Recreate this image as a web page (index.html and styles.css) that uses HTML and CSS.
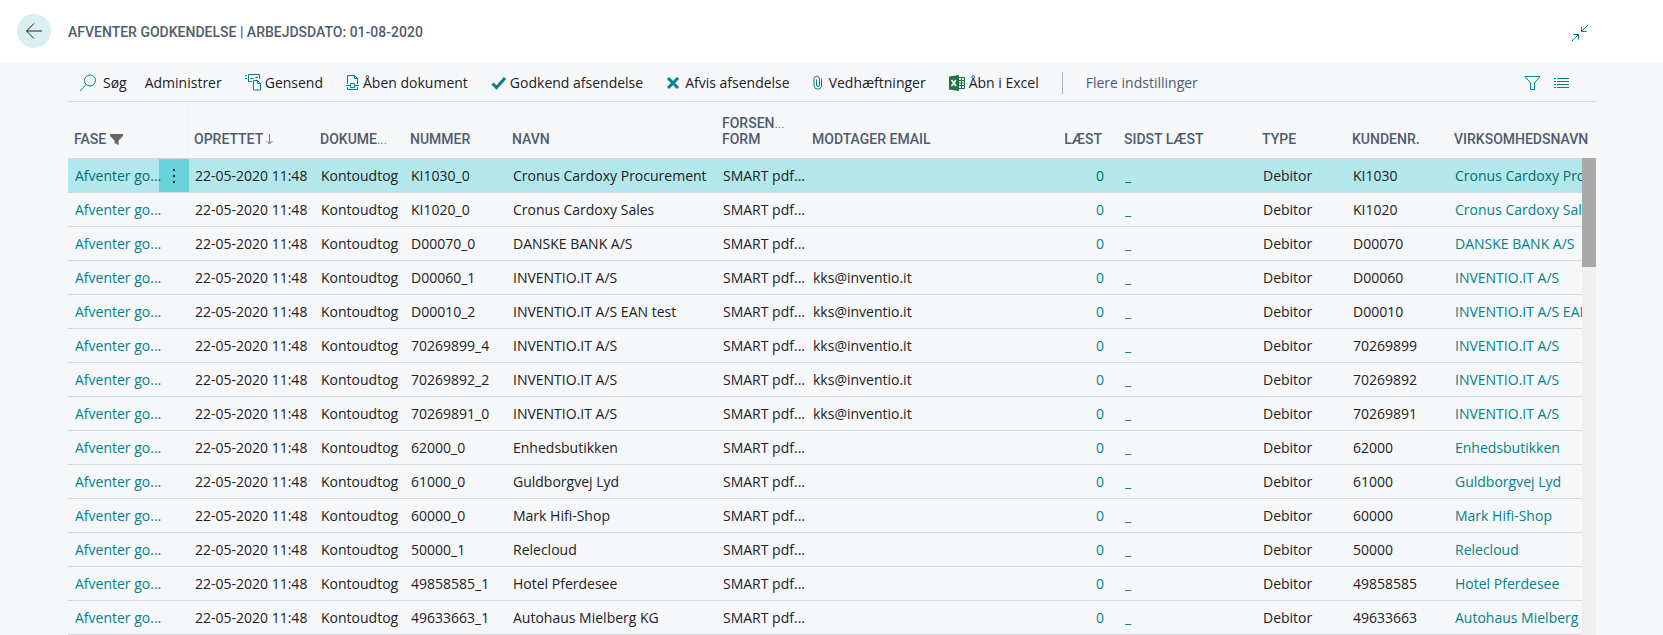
FILE: index.html
```html
<!DOCTYPE html>
<html lang="da">
<head>
<meta charset="utf-8">
<meta name="viewport" content="width=device-width, initial-scale=1">
<title>Afventer godkendelse</title>
<link rel="stylesheet" href="styles.css">
</head>
<body>
<header class="page-header">
    <button type="button" class="back" aria-label="Tilbage">
        <svg width="18" height="18" viewBox="0 0 18 18"><path d="M17 9H1.500M9 1.500L1.500 9L9 16.500"/></svg>
    </button>
    <h1 class="title">AFVENTER GODKENDELSE | ARBEJDSDATO: 01-08-2020</h1>
    <button type="button" class="collapse" aria-label="Skjul">
        <svg class="line" width="18" height="18" viewBox="0 0 18 18"><path d="M17 1L10.500 7.500M10.500 2.500V7.500H15.500M1 17L7.500 10.500M2.500 10.500H7.500V15.500"/></svg>
    </button>
</header>

<main class="content">
    <nav class="toolbar">
        <button type="button" class="action search">
            <svg class="line" width="18" height="18" viewBox="0 0 18 18"><circle cx="11" cy="6.500" r="5.500"/><path d="M7 10.500L1 17"/></svg>
            Søg
        </button>
        <button type="button" class="action">Administrer</button>
        <button type="button" class="action">
            <svg class="line" width="17" height="17" viewBox="0 0 17 17"><path d="M0 1.500H2M0 4.500H2M3.500 7.500V.500H14.500V5M3 7.500H7M5.500 4.500H8.500M11 2.500V4.500M11 3.500H13"/><path d="M8.500 6.500H12.500L15.500 9.500V16H8.500zM12.500 6.500V9.500H15.500"/></svg>
            Gensend
        </button>
        <button type="button" class="action">
            <svg class="line" width="14" height="16" viewBox="0 0 14 16"><path d="M1.500 9V.500H8.500L11.500 3.500V9M8.500 .500V3.500H11.500M0 10.500H4M9 10.500H13M1.500 12V14.500H11.500V12"/><path d="M4.500 8.500H8.500V12.500H4.500z"/></svg>
            Åben dokument
        </button>
        <button type="button" class="action">
            <svg class="bold" width="16" height="14" viewBox="0 0 16 14"><path d="M1.500 7.500L5.500 11.500L14 2"/></svg>
            Godkend afsendelse
        </button>
        <button type="button" class="action wide">
            <svg class="bold" width="14" height="14" viewBox="0 0 14 14"><path d="M2 2L12 12M12 2L2 12"/></svg>
            Afvis afsendelse
        </button>
        <button type="button" class="action clip">
            <svg class="line" width="10" height="16" viewBox="0 0 10 16"><path d="M3.500 4.500V10A1.300 1.300 0 0 0 6.500 10V3.500A2.800 2.800 0 0 0 1 3.500V11A3.800 3.800 0 0 0 8.500 11V3.500"/></svg>
            Vedhæftninger
        </button>
        <button type="button" class="action">
            <svg width="17" height="16" viewBox="0 0 17 16"><path fill="#217346" d="M0 1.500L10 0V16L0 14.500z"/><path fill="none" stroke="#217346" d="M10 2.500H15.500V13.500H10M10 5.500H15M10 8H15M10 10.500H15M12.500 2.500V13.500"/><path stroke="#fff" stroke-width="1.500" d="M2.500 5L7 11M7 5L2.500 11"/></svg>
            Åbn i Excel
        </button>
        <span class="divider"></span>
        <button type="button" class="action more">Flere indstillinger</button>
        <span class="spacer"></span>
        <button type="button" class="tool" aria-label="Filter">
            <svg class="line" width="17" height="16" viewBox="0 0 17 16"><path d="M1 1.500H16L10.500 8V14.500H6.500V8z"/></svg>
        </button>
        <button type="button" class="tool" aria-label="Liste">
            <svg class="line" width="16" height="12" viewBox="0 0 16 12"><path d="M0 1.500H2M3 1.500H15M0 4.500H2M3 4.500H15M0 7.500H2M3 7.500H15M0 10.500H2M3 10.500H15"/></svg>
        </button>
    </nav>

    <div class="list">
        <table class="grid">
            <colgroup>
                <col class="c-fase"><col class="c-menu"><col class="c-date"><col class="c-small"><col class="c-number"><col class="c-name"><col class="c-small"><col><col class="c-read"><col class="c-last"><col class="c-small"><col class="c-number"><col class="c-company">
            </colgroup>
            <thead>
                <tr>
                    <th colspan="2">FASE <svg width="13" height="11" viewBox="0 0 13 11"><path fill="#666" d="M0 0H13V2L8.500 6.500V11L4.500 9V6.500L0 2z"/></svg></th>
                    <th>OPRETTET <svg width="7" height="11" viewBox="0 0 7 11"><path fill="none" stroke="#777" d="M3.500 0V10M.5 7L3.500 10L6.500 7"/></svg></th>
                    <th>DOKUME<span class="dots">...</span></th>
                    <th>NUMMER</th>
                    <th>NAVN</th>
                    <th>FORSEN<span class="dots">...</span><br>FORM</th>
                    <th>MODTAGER EMAIL</th>
                    <th class="right">LÆST</th>
                    <th>SIDST LÆST</th>
                    <th>TYPE</th>
                    <th>KUNDENR.</th>
                    <th>VIRKSOMHEDSNAVN</th>
                </tr>
            </thead>
            <tbody id="rows"></tbody>
        </table>
        <div class="scrollbar"><div class="thumb"></div></div>
    </div>
</main>
<script src="script.js"></script>
</body>
</html>
```
FILE: styles.css
```css
* {
    box-sizing: border-box;
}
body {
    margin: 0;
    background: #f6f7f9;
    color: #212121;
    font: 14px/20px "Open Sans", "Noto Sans", sans-serif;
}
button {
    padding: 0;
    border: 0;
    background: none;
    color: inherit;
    font: inherit;
    cursor: pointer;
}
svg {
    flex: none;
}
.line {
    fill: none;
    stroke: #00838a;
}
.bold {
    fill: none;
    stroke: #00838a;
    stroke-width: 3;
}

/* header */
.page-header {
    display: flex;
    align-items: center;
    height: 62px;
    padding: 0 74px 0 17px;
    background: #fff;
}
.back {
    display: flex;
    align-items: center;
    justify-content: center;
    width: 34px;
    height: 34px;
    margin-right: 17px;
    border-radius: 50%;
    background: #d9f0f0;
}
.back svg {
    fill: none;
    stroke: #222;
}
.title {
    margin: 0;
    padding-top: 2px;
    color: #505c6d;
    font: 500 14px/20px Roboto, sans-serif;
}
.collapse {
    display: flex;
    margin-left: auto;
    padding-top: 4px;
}

/* toolbar */
.content {
    padding: 0 67px 0 68px;
}
.toolbar {
    display: flex;
    align-items: center;
    gap: 23px;
    height: 40px;
    padding: 2px 26px 0 11px;
    border-bottom: 1px solid #d5d8dc;
    white-space: nowrap;
}
.action {
    display: flex;
    align-items: center;
    gap: 3px;
}
.search {
    gap: 6px;
    margin-right: -5px;
}
.wide {
    gap: 5px;
}
.clip {
    gap: 6px;
}
.more {
    color: #505c6d;
}
.divider {
    width: 1px;
    height: 22px;
    background: #a9b0bc;
}
.spacer {
    flex: 1;
}
.tool {
    display: flex;
}
.tool + .tool {
    margin-left: -10px;
}

/* list */
.list {
    display: flex;
}
.grid {
    flex: 1;
    width: 0;
    table-layout: fixed;
    border-spacing: 0;
}
.c-fase { width: 91px; }
.c-menu { width: 29px; }
.c-date { width: 126px; }
.c-small { width: 90px; }
.c-number { width: 102px; }
.c-name { width: 210px; }
.c-read { width: 60px; }
.c-last { width: 138px; }
.c-company { width: 134px; }
th {
    height: 56px;
    padding: 0 0 11px 6px;
    vertical-align: bottom;
    text-align: left;
    white-space: nowrap;
    color: #505c6d;
    font: 500 14px/16px Roboto, sans-serif;
}
th:first-child {
    border-right: 1px solid #f1f2f4;
}
th svg {
    vertical-align: -1px;
}
.dots {
    font-weight: 300;
}
td {
    height: 34px;
    padding: 0 0 0 7px;
    border-top: 1px solid #d5d8dc;
    white-space: nowrap;
}
td:last-child {
    overflow: hidden;
}
tr:last-child td {
    height: 35px;
    border-bottom: 1px solid #d5d8dc;
}
th.right {
    padding-right: 16px;
    text-align: right;
}
td.right {
    padding-right: 14px;
    text-align: right;
}
td a {
    position: relative;
    color: #00838a;
    text-decoration: none;
}
.selected {
    background: #b2e8ec;
}
.selected a {
    color: #006d74;
}
td.menu {
    padding: 0;
}
.menu button {
    display: flex;
    align-items: center;
    justify-content: center;
    width: 30px;
    height: 33px;
    background: #67d3da;
}
.scrollbar {
    width: 14px;
    margin-top: 56px;
    background: #efefef;
}
.thumb {
    height: 109px;
    background: #a9a9a9;
}
```
FILE: script.js
```js
// number, name, email, customer no.
var rows = [
    ['KI1030_0', 'Cronus Cardoxy Procurement', '', 'KI1030'],
    ['KI1020_0', 'Cronus Cardoxy Sales', '', 'KI1020'],
    ['D00070_0', 'DANSKE BANK A/S', '', 'D00070'],
    ['D00060_1', 'INVENTIO.IT A/S', 'kks@inventio.it', 'D00060'],
    ['D00010_2', 'INVENTIO.IT A/S EAN test', 'kks@inventio.it', 'D00010'],
    ['70269899_4', 'INVENTIO.IT A/S', 'kks@inventio.it', '70269899'],
    ['70269892_2', 'INVENTIO.IT A/S', 'kks@inventio.it', '70269892'],
    ['70269891_0', 'INVENTIO.IT A/S', 'kks@inventio.it', '70269891'],
    ['62000_0', 'Enhedsbutikken', '', '62000'],
    ['61000_0', 'Guldborgvej Lyd', '', '61000'],
    ['60000_0', 'Mark Hifi-Shop', '', '60000'],
    ['50000_1', 'Relecloud', '', '50000'],
    ['49858585_1', 'Hotel Pferdesee', '', '49858585'],
    ['49633663_1', 'Autohaus Mielberg KG', '', '49633663']
];
var menu = '<button type="button" aria-label="Flere"><svg width="4" height="16" viewBox="0 0 4 16" fill="#222"><path d="M1 1h2v2H1zM1 7h2v2H1zM1 13h2v2H1z"/></svg></button>';

function link(text) {
    return '<a href="#">' + text + '</a>';
}

document.getElementById('rows').innerHTML = rows.map(function (r, i) {
    var cells = [link('Afventer go...'), null, '22-05-2020 11:48', 'Kontoudtog', r[0], r[1],
        'SMART pdf...', r[2], null, link('_'), 'Debitor', r[3], link(r[1])];
    return '<tr' + (i === 0 ? ' class="selected"' : '') + '>' + cells.map(function (c, n) {
        if (n === 1) return '<td class="menu">' + (i === 0 ? menu : '') + '</td>';
        if (n === 8) return '<td class="right">' + link('0') + '</td>';
        return '<td>' + c + '</td>';
    }).join('') + '</tr>';
}).join('');
```
